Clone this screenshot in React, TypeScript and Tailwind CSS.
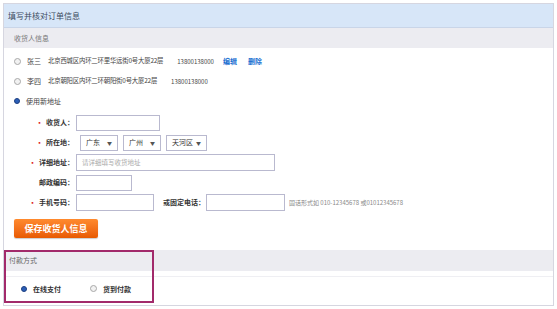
import { FC, ReactNode } from "react";

const font = { fontFamily: '"Noto Sans CJK SC", "Noto Sans", sans-serif' };

const Radio: FC<{ checked?: boolean }> = ({ checked }) =>
  checked ? (
    <span className="inline-block w-[6px] h-[6px] rounded-full bg-[#2b5fb8] border border-[#1d3f80] shrink-0" />
  ) : (
    <span className="inline-block w-[7px] h-[7px] rounded-full bg-[#f2f2f2] border border-[#a8a8a8] shrink-0" />
  );

const Label: FC<{ req?: boolean; children: ReactNode }> = ({ req, children }) => (
  <div className="w-[62px] shrink-0 text-right font-bold text-[7px] text-[#333] pr-[2px]">
    {req && <span className="text-[#d22] mr-[3px]">•</span>}
    {children}
  </div>
);

const Select: FC<{ text: string; w: string }> = ({ text, w }) => (
  <div className={`${w} h-[16px] border border-[#b9b9cf] bg-white flex items-center justify-between px-[5px] text-[7px] text-[#333]`}>
    <span>{text}</span>
    <span className="text-[5px] text-[#555]">▼</span>
  </div>
);

export default function App() {
  return (
    <div className="w-[557px] h-[309px] bg-white pt-[3px] px-[3px]" style={font}>
      <div className="w-[551px] h-[303px] border border-[#d6d6e0] flex flex-col relative">
        {/* 标题 */}
        <div className="h-[24px] bg-[#d7e6f8] border-b border-[#c9d5e8] flex items-center pl-[4px] text-[8px] text-[#3b4b60]">
          填写并核对订单信息
        </div>
        <div className="h-[20px] bg-[#ececf1] flex items-center pl-[10px] text-[7px] text-[#777]">
          收货人信息
        </div>

        {/* 地址列表 */}
        <div className="pt-[3px] pl-[10px] flex flex-col">
          <div className="h-[20px] flex items-center gap-[6px] text-[7px] text-[#444]">
            <Radio />
            <span>张三</span>
            <span className="ml-[1px] text-[6.4px] tracking-[-0.2px]">北京西城区内环二环里华远街0号大厦22层</span>
            <span className="text-[6px] ml-[8px]">13800138000</span>
            <span className="text-[#1b6fd1] font-bold ml-[3px]">编辑</span>
            <span className="text-[#1b6fd1] font-bold ml-[5px]">删除</span>
          </div>
          <div className="h-[20px] flex items-center gap-[6px] text-[7px] text-[#444]">
            <Radio />
            <span>李四</span>
            <span className="ml-[1px] text-[6.4px] tracking-[-0.2px]">北京朝阳区内环二环朝阳街0号大厦22层</span>
            <span className="text-[6px] ml-[8px]">13800138000</span>
          </div>
          <div className="h-[20px] flex items-center gap-[6px] text-[7px] text-[#444]">
            <Radio checked />
            <span>使用新地址</span>
          </div>
        </div>

        {/* 新地址表单 */}
        <div className="mt-[3px] pl-[10px] flex flex-col gap-[3px]">
          <div className="h-[17px] flex items-center">
            <Label req>收货人：</Label>
            <div className="w-[84px] h-[16px] border border-[#b9b9cf]" />
          </div>
          <div className="h-[17px] flex items-center gap-[5px]">
            <Label req>所在地：</Label>
            <div className="ml-[-1px] flex gap-[5px]">
              <Select text="广东" w="w-[38px]" />
              <Select text="广州" w="w-[38px]" />
              <Select text="天河区" w="w-[41px]" />
            </div>
          </div>
          <div className="h-[17px] flex items-center">
            <Label req>详细地址：</Label>
            <div className="w-[199px] h-[17px] border border-[#b9b9cf] flex items-center pl-[5px] text-[6.5px] text-[#aaa]">
              请详细填写收货地址
            </div>
          </div>
          <div className="h-[17px] flex items-center">
            <Label>邮政编码：</Label>
            <div className="w-[56px] h-[16px] border border-[#b9b9cf]" />
          </div>
          <div className="h-[17px] flex items-center">
            <Label req>手机号码：</Label>
            <div className="w-[78px] h-[17px] border border-[#b9b9cf]" />
            <span className="ml-[9px] font-bold text-[7px] text-[#333]">或固定电话：</span>
            <div className="ml-[1px] w-[79px] h-[17px] border border-[#b9b9cf]" />
            <span className="ml-[4px] text-[6px] text-[#888]">固话形式如 010-12345678 或01012345678</span>
          </div>
        </div>

        <div className="mt-[8px] pl-[10px]">
          <div className="w-[84px] h-[19px] rounded-[2px] bg-gradient-to-b from-[#ff8a2e] to-[#e85a00] flex items-center justify-center text-white font-bold text-[9px] shadow-[0_1px_1px_rgba(0,0,0,0.2)]">
            保存收货人信息
          </div>
        </div>

        {/* 付款方式 */}
        <div className="mt-[12px] relative">
          <div className="h-[21px] bg-[#ececf1] flex items-center pl-[5px] text-[7px] text-[#666]">付款方式</div>
          <div className="h-[6px] border-b border-[#efeff3]" />
          <div className="h-[24px] flex items-center pl-[17px] text-[7px] text-[#333] font-bold">
            <Radio checked />
            <span className="ml-[6px]">在线支付</span>
            <span className="ml-[29px]"><Radio /></span>
            <span className="ml-[6px]">货到付款</span>
          </div>
          <div className="absolute left-0 top-0 w-[150px] h-[53px] border-2 border-[#a22a6b]" />
        </div>
      </div>
    </div>
  );
}
